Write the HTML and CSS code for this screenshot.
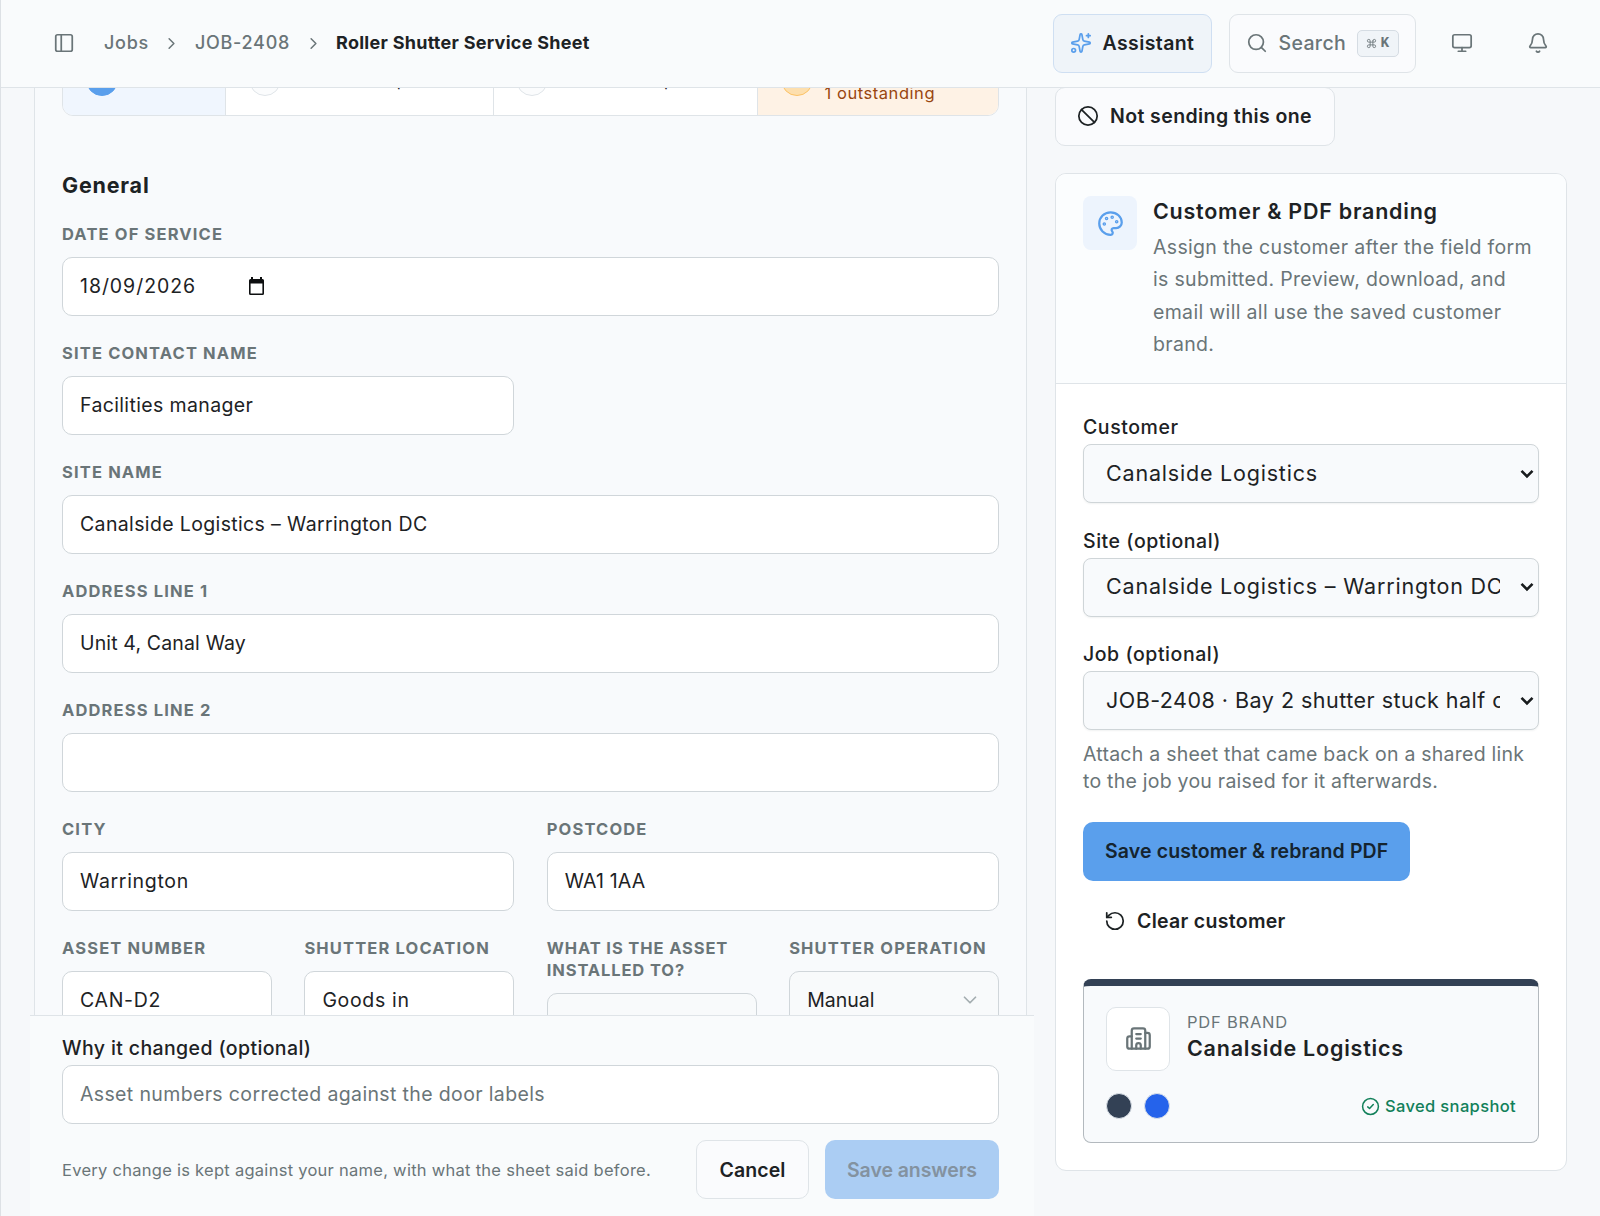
FILE: index.html
```html
<!DOCTYPE html>
<html lang="en">
<head>
<meta charset="utf-8">
<title>Roller Shutter Service Sheet</title>
<link rel="stylesheet" href="styles.css">
</head>
<body>
<div class="app">
  <header class="topbar">
    <svg class="icon sidebar-icon" viewBox="0 0 24 24"><rect x="3" y="3" width="18" height="18" rx="2"/><path d="M9 3v18"/></svg>
    <nav class="crumbs">
      <a class="crumb crumb-jobs">Jobs</a>
      <svg class="icon crumb-sep" viewBox="0 0 24 24"><path d="m9 18 6-6-6-6"/></svg>
      <a class="crumb crumb-ref">JOB-2408</a>
      <svg class="icon crumb-sep" viewBox="0 0 24 24"><path d="m9 18 6-6-6-6"/></svg>
      <span class="crumb crumb-current">Roller Shutter Service Sheet</span>
    </nav>
    <div class="tools">
      <button class="tool assistant">
        <svg class="icon" viewBox="0 0 24 24"><path d="M11.017 2.814a1 1 0 0 1 1.966 0l1.051 5.558a2 2 0 0 0 1.594 1.594l5.558 1.051a1 1 0 0 1 0 1.966l-5.558 1.051a2 2 0 0 0-1.594 1.594l-1.051 5.558a1 1 0 0 1-1.966 0l-1.051-5.558a2 2 0 0 0-1.594-1.594l-5.558-1.051a1 1 0 0 1 0-1.966l5.558-1.051a2 2 0 0 0 1.594-1.594z"/><path d="M20 2v4M22 4h-4"/><circle cx="4" cy="20" r="2"/></svg>
        <span>Assistant</span>
      </button>
      <button class="tool search">
        <svg class="icon" viewBox="0 0 24 24"><path d="m21 21-4.34-4.34"/><circle cx="11" cy="11" r="8"/></svg>
        <span>Search</span>
        <kbd class="kbd"><svg class="icon cmd" viewBox="0 0 24 24"><path d="M15 6v12a3 3 0 1 0 3-3H6a3 3 0 1 0 3 3V6a3 3 0 1 0-3 3h12a3 3 0 1 0-3-3"/></svg>K</kbd>
      </button>
      <button class="icon-btn"><svg class="icon" viewBox="0 0 24 24"><rect x="2" y="3" width="20" height="14" rx="2"/><path d="M8 21h8M12 17v4"/></svg></button>
      <button class="icon-btn"><svg class="icon" viewBox="0 0 24 24"><path d="M10.268 21a2 2 0 0 0 3.464 0"/><path d="M3.262 15.326A1 1 0 0 0 4 17h16a1 1 0 0 0 .74-1.673C19.41 13.956 18 12.499 18 8A6 6 0 0 0 6 8c0 4.499-1.411 5.956-2.738 7.326"/></svg></button>
    </div>
  </header>

  <main class="main">
    <section class="sheet">
      <div class="sheet-scroll">
        <div class="sheet-card">
          <ol class="stepper">
            <li class="step step-active"><span class="dot"></span></li>
            <li class="step"><span class="dot"></span><span class="step-name">Mechanical parts</span></li>
            <li class="step step-third"><span class="dot"></span><span class="step-name">Electrical &amp; parts</span></li>
            <li class="step step-warn"><span class="dot"></span><span class="step-note">Sign off<br>1 outstanding</span></li>
          </ol>
          <h2 class="section-title">General</h2>
          <div class="fields">
            <div class="field full"><label class="label">Date of service</label><div class="input date"><span>18/09/2026</span><svg class="cal" viewBox="0 0 15 18"><path fill-rule="evenodd" d="M2 0h2v2h7V0h2v2h.5A1.5 1.5 0 0 1 15 3.500v13A1.500 1.500 0 0 1 13.500 18h-12A1.500 1.500 0 0 1 0 16.500v-13A1.500 1.500 0 0 1 1.500 2H2zM1.600 6.500v9.900h11.800V6.500z"/></svg></div></div>
            <div class="field half"><label class="label">Site contact name</label><div class="input">Facilities manager</div></div>
            <div class="field full"><label class="label">Site name</label><div class="input">Canalside Logistics – Warrington DC</div></div>
            <div class="field full"><label class="label">Address line 1</label><div class="input snug">Unit 4, Canal Way</div></div>
            <div class="field full"><label class="label">Address line 2</label><div class="input"></div></div>
            <div class="field half"><label class="label">City</label><div class="input wide">Warrington</div></div>
            <div class="field half"><label class="label">Postcode</label><div class="input snug">WA1 1AA</div></div>
            <div class="field quarter"><label class="label">Asset number</label><div class="input wide">CAN-D2</div></div>
            <div class="field quarter"><label class="label">Shutter location</label><div class="input wide">Goods in</div></div>
            <div class="field quarter"><label class="label tight">What is the asset installed to?</label><div class="input picker picker-short">Brick</div></div>
            <div class="field quarter"><label class="label">Shutter operation</label><div class="input picker"><span>Manual</span><svg class="icon caret" viewBox="0 0 24 24"><path d="m6 9 6 6 6-6"/></svg></div></div>
          </div>
        </div>
      </div>
      <footer class="savebar">
        <label class="field-name why">Why it changed (optional)</label>
        <div class="input placeholder">Asset numbers corrected against the door labels</div>
        <div class="save-row">
          <p class="save-note">Every change is kept against your name, with what the sheet said before.</p>
          <button class="btn outline cancel">Cancel</button>
          <button class="btn primary disabled">Save answers</button>
        </div>
      </footer>
    </section>

    <aside class="side">
      <button class="btn outline not-sending"><svg class="icon" viewBox="0 0 24 24"><circle cx="12" cy="12" r="10"/><path d="M4.929 4.929 19.070 19.071"/></svg>Not sending this one</button>
      <section class="brand-card">
        <div class="brand-head">
          <span class="brand-icon"><svg class="icon" viewBox="0 0 24 24"><path d="M12 22a1 1 0 0 1 0-20 10 9 0 0 1 10 9 5 5 0 0 1-5 5h-2.250a1.750 1.750 0 0 0-1.400 2.800l.3.4a1.750 1.750 0 0 1-1.400 2.800z"/><circle cx="13.500" cy="6.500" r=".6"/><circle cx="17.500" cy="10.500" r=".6"/><circle cx="6.500" cy="12.500" r=".6"/><circle cx="8.500" cy="7.500" r=".6"/></svg></span>
          <div>
            <h2 class="brand-title">Customer &amp; PDF branding</h2>
            <p class="brand-desc">Assign the customer after the field form<br>is submitted. Preview, download, and<br>email will all use the saved customer<br>brand.</p>
          </div>
        </div>
        <div class="brand-body">
          <label class="field-name">Customer</label>
          <select class="select"><option>Canalside Logistics</option></select>
          <label class="field-name">Site (optional)</label>
          <select class="select"><option>Canalside Logistics – Warrington DC</option></select>
          <label class="field-name">Job (optional)</label>
          <select class="select select-job"><option>JOB-2408 · Bay 2 shutter stuck half open</option></select>
          <p class="help">Attach a sheet that came back on a shared link<br>to the job you raised for it afterwards.</p>
          <button class="btn primary">Save customer &amp; rebrand PDF</button>
          <button class="btn ghost"><svg class="icon" viewBox="0 0 24 24"><path d="M3 12a9 9 0 1 0 9-9 9.750 9.750 0 0 0-6.740 2.740L3 8"/><path d="M3 3v5h5"/></svg>Clear customer</button>
          <div class="preview">
            <div class="preview-top">
              <span class="preview-logo"><svg class="icon" viewBox="0 0 24 24"><path d="M10 12h4M10 8h4M14 21v-3a2 2 0 0 0-4 0v3"/><path d="M6 10H4a2 2 0 0 0-2 2v7a2 2 0 0 0 2 2h16a2 2 0 0 0 2-2V9a2 2 0 0 0-2-2h-2"/><path d="M6 21V5a2 2 0 0 1 2-2h8a2 2 0 0 1 2 2v16"/></svg></span>
              <div>
                <p class="preview-kicker">PDF BRAND</p>
                <p class="preview-name">Canalside Logistics</p>
              </div>
            </div>
            <div class="preview-bottom">
              <span class="swatch swatch-navy"></span>
              <span class="swatch swatch-blue"></span>
              <span class="saved"><svg class="icon" viewBox="0 0 24 24"><circle cx="12" cy="12" r="10"/><path d="m8.500 12.500 2.300 2 4.700-5"/></svg>Saved snapshot</span>
            </div>
          </div>
        </div>
      </section>
    </aside>
  </main>
</div>
</body>
</html>
```

FILE: styles.css
```css
:root {
  --ink: #1d2224;
  --muted: #6a7578;
  --page: #f6f8fa;
  --card: #f8fafc;
  --line: #dfe4e8;
  --field-line: #d0d6da;
  --blue: #5a9fec;
}

* { box-sizing: border-box; }

body {
  margin: 0;
  font-family: Inter, "Liberation Sans", sans-serif;
  font-size: 19.5px;
  letter-spacing: .36px;
  color: var(--ink);
  background: var(--page);
}

h2, p, ol { margin: 0; padding: 0; }
button, select, kbd { font: inherit; letter-spacing: inherit; color: inherit; }

.icon {
  width: 22px;
  height: 22px;
  flex: none;
  fill: none;
  stroke: currentColor;
  stroke-width: 1.9;
  stroke-linecap: round;
  stroke-linejoin: round;
}

.app {
  display: flex;
  flex-direction: column;
  width: 1600px;
  height: 1216px;
  overflow: hidden;
  border-left: 1px solid #dde1e5;
}

/* Top bar */
.topbar {
  display: flex;
  align-items: center;
  flex: none;
  height: 88px;
  padding: 0 33px 1px 52px;
  background: #f9fbfc;
  border-bottom: 1px solid var(--line);
}
.sidebar-icon { color: var(--muted); }
.crumbs {
  display: flex;
  align-items: center;
  gap: 13.5px;
  margin-left: 29px;
  font-size: 18px;
  font-weight: 500;
  color: var(--muted);
}
.crumb { line-height: 24px; }
.crumb-jobs, .crumb-ref { letter-spacing: .72px; }
.crumb-current { font-weight: 700; color: var(--ink); letter-spacing: .27px; }
.crumb-sep { width: 19px; height: 19px; }
.tools { display: flex; gap: 16.5px; margin-left: auto; }
.tool {
  display: flex;
  align-items: center;
  gap: 10.5px;
  height: 59px;
  padding: 0 16px;
  border: 1px solid var(--line);
  border-radius: 9px;
  background: #fafbfd;
}
.assistant {
  width: 159px;
  margin-right: .5px;
  font-weight: 600;
  letter-spacing: .4px;
  background: #eff4f9;
  border-color: #cfdff2;
}
.assistant .icon { color: var(--blue); }
.search { width: 187px; color: var(--muted); font-weight: 500; letter-spacing: .35px; }
.kbd {
  display: flex;
  align-items: center;
  justify-content: center;
  gap: 4px;
  width: 42px;
  height: 27px;
  border: 1px solid #d5dce3;
  border-radius: 5px;
  background: #f0f4f8;
  font-family: "Liberation Mono", monospace;
  font-size: 14.5px;
  font-weight: 700;
}
.cmd { width: 11px; height: 11px; }
.icon-btn {
  display: flex;
  align-items: center;
  justify-content: center;
  width: 59px;
  height: 59px;
  padding: 0;
  border: 0;
  background: none;
  color: var(--muted);
}

/* Columns */
.main {
  display: flex;
  flex: 1;
  min-height: 0;
  overflow: hidden;
  padding: 0 33px 0 29px;
  justify-content: space-between;
}
.sheet { display: flex; flex-direction: column; width: 1004px; }
.sheet-scroll { flex: 1; min-height: 0; overflow: hidden; padding: 0 7px 0 4px; }
.sheet-card {
  padding: 0 27px;
  background: var(--card);
  border: solid var(--line);
  border-width: 0 1px;
}

/* Stepper */
.stepper {
  display: flex;
  height: 72px;
  margin-top: -44px;
  list-style: none;
  border: 1px solid var(--line);
  border-radius: 11px;
  overflow: hidden;
  background: #fff;
  font-size: 16.5px;
}
.step {
  display: flex;
  flex: none;
  align-items: center;
  gap: 10px;
  width: 267.500px;
  padding-left: 22.500px;
  border-right: 1px solid var(--line);
}
.step-active { width: 163px; background: #f0f6fe; }
.step-third { width: 264.500px; }
.step-warn { width: auto; flex: 1; border-right: 0; background: #fef2e5; color: #98460f; gap: 12px; }
.dot { width: 32px; height: 32px; flex: none; border-radius: 50%; border: 1px solid var(--line); background: #fbfcfd; }
.step-active .dot { background: var(--blue); border-color: var(--blue); }
.step-warn .dot { background: #fddfae; border-color: #fbc266; }
.step-name { letter-spacing: 1.1px; white-space: nowrap; }
.step-note { line-height: 22px; margin-top: 3px; letter-spacing: .55px; }

/* Form */
.section-title {
  margin-top: 55px;
  font-size: 21.5px;
  line-height: 28px;
  font-weight: 700;
  letter-spacing: .8px;
}
.fields {
  display: grid;
  grid-template-columns: repeat(4, 1fr);
  gap: 26px 32.5px;
  margin-top: 24px;
}
.full { grid-column: 1 / -1; }
.half { grid-column: span 2; }
.field:nth-child(2) { grid-column: 1 / 3; }
.label {
  display: block;
  margin-bottom: 12px;
  font-size: 16.5px;
  line-height: 22px;
  font-weight: 700;
  letter-spacing: 1.15px;
  text-transform: uppercase;
  color: var(--muted);
}
.label.tight { letter-spacing: .88px; }
.input {
  display: flex;
  align-items: center;
  height: 59px;
  padding: 0 17px 1.500px;
  border: 1px solid var(--field-line);
  border-radius: 10px;
  background: #fff;
}
.snug { letter-spacing: .15px; }
.wide { letter-spacing: .68px; }
.date { gap: 53px; letter-spacing: .95px; }
.cal { width: 15px; height: 18px; fill: #0d0f10; }
.picker { justify-content: space-between; background: #f8fafb; letter-spacing: .03px; }
.picker-short { padding-top: 4px; padding-bottom: 0; }
.caret { color: #a4adb0; }
.placeholder { color: var(--muted); }

/* Save bar */
.savebar {
  flex: none;
  height: 201px;
  padding: 19px 35px 0 32px;
  background: #f9fbfc;
  border-top: 1px solid var(--line);
}
.field-name { display: block; margin-bottom: 4px; line-height: 26px; font-weight: 500; letter-spacing: .55px; }
.why { letter-spacing: .38px; }
.save-row { display: flex; align-items: center; gap: 16px; margin-top: 16px; }
.save-note { flex: 1; white-space: nowrap; font-size: 16.5px; letter-spacing: .27px; color: var(--muted); }

/* Buttons */
.btn {
  display: flex;
  align-items: center;
  justify-content: center;
  gap: 11px;
  height: 59px;
  padding: 0 21px 1px;
  border: 1px solid transparent;
  border-radius: 10px;
  background: none;
  font-weight: 600;
  white-space: nowrap;
}
.outline { border-color: var(--line); background: #fafbfd; }
.primary { background: var(--blue); letter-spacing: .12px; color: #15242f; }
.save-row .btn { padding-bottom: 0; }
.cancel { width: 113px; letter-spacing: .1px; }
.disabled { width: 174px; background: #abcdf3; color: #8392a0; letter-spacing: -.08px; }
.ghost { letter-spacing: .3px; padding-left: 20px; }

/* Side column */
.side { width: 512px; margin-top: -1.500px; }
.not-sending { width: 280px; letter-spacing: .4px; padding-right: 22px; }
.brand-card {
  margin-top: 27.500px;
  height: 998px;
  border: 1px solid var(--line);
  border-radius: 11px;
  background: #fff;
  overflow: hidden;
}
.brand-head {
  display: flex;
  gap: 16px;
  height: 210px;
  padding: 22px 27px 0;
  background: #fbfdfe;
  border-bottom: 1px solid var(--line);
}
.brand-icon {
  display: flex;
  align-items: center;
  justify-content: center;
  width: 54px;
  height: 54px;
  flex: none;
  border-radius: 8px;
  background: #edf4fd;
  color: var(--blue);
}
.brand-icon .icon { width: 27px; height: 27px; stroke-width: 2; }
.brand-title { font-size: 21.5px; line-height: 30px; font-weight: 600; letter-spacing: .76px; white-space: nowrap; }
.brand-desc { margin-top: 5px; line-height: 32.400px; letter-spacing: .33px; color: var(--muted); white-space: nowrap; }
.brand-body { padding: 30px 27px 0; }
.select {
  display: block;
  appearance: none;
  width: 100%;
  height: 59px;
  margin-bottom: 24.500px;
  padding: 0 38px 2px 22px;
  border: 1px solid #cfd5d8;
  border-radius: 8px;
  background: #f8fafc url("data:image/svg+xml,%3Csvg xmlns='http://www.w3.org/2000/svg' width='14' height='10' fill='none' stroke='%23191c1e' stroke-width='2.6'%3E%3Cpath d='M1.500 1.800 7 7.400l5.500-5.600'/%3E%3C/svg%3E") no-repeat right 4.500px center;
  box-shadow: 0 1px 2px rgba(20, 30, 40, .06);
  font-size: 21.5px;
  letter-spacing: .8px;
}
.select-job { letter-spacing: .48px; }
.help { margin: -13.500px 0 27px; line-height: 27px; letter-spacing: .24px; color: var(--muted); white-space: nowrap; }
.brand-body .ghost { margin-top: 11px; }

/* Brand preview */
.preview {
  height: 164px;
  margin-top: 27.500px;
  padding: 21px 22px 0;
  border: 1px solid #b3b9be;
  border-top: 7px solid #334155;
  border-radius: 8px;
  background: #f8fafc;
}
.preview-top { display: flex; gap: 17px; }
.preview-logo {
  display: flex;
  align-items: center;
  justify-content: center;
  width: 64px;
  height: 64px;
  flex: none;
  border: 1px solid var(--line);
  border-radius: 10px;
  background: #fff;
  color: var(--muted);
}
.preview-logo .icon { width: 27px; height: 27px; stroke-width: 2; }
.preview-kicker { margin-top: 4px; font-size: 16.5px; line-height: 22px; letter-spacing: .78px; color: var(--muted); }
.preview-name { margin-top: 1px; font-size: 21.5px; line-height: 28px; font-weight: 600; letter-spacing: .78px; }
.preview-bottom { display: flex; align-items: center; gap: 12px; margin-top: 22.500px; }
.swatch { width: 26px; height: 26px; border-radius: 50%; border: 1px solid #dde3ea; }
.swatch-navy { background: #334155; }
.swatch-blue { background: #2563eb; }
.saved { display: flex; align-items: center; gap: 5px; margin-left: auto; font-size: 16.5px; font-weight: 500; color: #12805a; }
.saved .icon { width: 19px; height: 19px; }
```
